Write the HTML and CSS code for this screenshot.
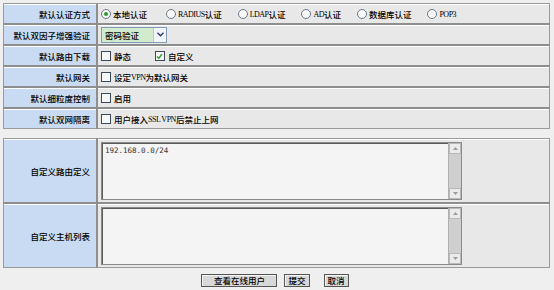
FILE: index.html
```html
<!DOCTYPE html>
<html lang="zh-CN">
<head>
    <meta charset="UTF-8">
    <title>SSL VPN 用户设置</title>
    <link rel="stylesheet" href="styles.css">
</head>
<body>

    <!-- 默认设置 -->
    <table class="grid">
        <tr>
            <td class="label">默认认证方式</td>
            <td class="value">
                <label class="opt first"><span class="radio on"></span>本地认证</label>
                <label class="opt"><span class="radio"></span><span class="en">RADIUS</span>认证</label>
                <label class="opt"><span class="radio"></span><span class="en">LDAP</span>认证</label>
                <label class="opt"><span class="radio"></span><span class="en">AD</span>认证</label>
                <label class="opt"><span class="radio"></span>数据库认证</label>
                <label class="opt"><span class="radio"></span><span class="en">POP3</span></label>
            </td>
        </tr>
        <tr>
            <td class="label">默认双因子增强验证</td>
            <td class="value">
                <div class="select">
                    <span class="select-text">密码验证</span>
                    <span class="select-btn">
                        <svg width="7" height="5" viewBox="0 0 7 5"><path d="M0.5 0.8 L3.5 3.8 L6.5 0.8" fill="none" stroke="#2a3a6a" stroke-width="1.4"/></svg>
                    </span>
                </div>
            </td>
        </tr>
        <tr>
            <td class="label">默认路由下载</td>
            <td class="value">
                <label class="opt wide"><span class="check"></span>静态</label>
                <label class="opt"><span class="check">
                    <svg width="7" height="7" viewBox="0 0 7 7"><path d="M1 3.5 L2.8 5.3 L6 1.2" fill="none" stroke="#2e9a2e" stroke-width="1.4"/></svg>
                </span>自定义</label>
            </td>
        </tr>
        <tr>
            <td class="label">默认网关</td>
            <td class="value">
                <label class="opt"><span class="check"></span>设定<span class="en">VPN</span>为默认网关</label>
            </td>
        </tr>
        <tr>
            <td class="label">默认细粒度控制</td>
            <td class="value">
                <label class="opt"><span class="check"></span>启用</label>
            </td>
        </tr>
        <tr>
            <td class="label">默认双网隔离</td>
            <td class="value">
                <label class="opt"><span class="check"></span>用户接入<span class="en">SSL VPN</span>后禁止上网</label>
            </td>
        </tr>
    </table>

    <!-- 自定义路由 / 主机 -->
    <table class="grid big">
        <tr>
            <td class="label">自定义路由定义</td>
            <td class="value">
                <div class="area">
                    <textarea>192.168.0.0/24</textarea>
                    <div class="sbar">
                        <span class="sbtn"><svg width="5" height="3" viewBox="0 0 5 3"><path d="M0 3 L2.5 0 L5 3Z" fill="#9a9a9a"/></svg></span>
                        <span class="sbtn"><svg width="5" height="3" viewBox="0 0 5 3"><path d="M0 0 L2.5 3 L5 0Z" fill="#9a9a9a"/></svg></span>
                    </div>
                </div>
            </td>
        </tr>
        <tr>
            <td class="label">自定义主机列表</td>
            <td class="value">
                <div class="area">
                    <textarea></textarea>
                    <div class="sbar">
                        <span class="sbtn"><svg width="5" height="3" viewBox="0 0 5 3"><path d="M0 3 L2.5 0 L5 3Z" fill="#9a9a9a"/></svg></span>
                        <span class="sbtn"><svg width="5" height="3" viewBox="0 0 5 3"><path d="M0 0 L2.5 3 L5 0Z" fill="#9a9a9a"/></svg></span>
                    </div>
                </div>
            </td>
        </tr>
    </table>

    <div class="actions">
        <button class="btn wide">查看在线用户</button>
        <button class="btn">提交</button>
        <button class="btn">取消</button>
    </div>

</body>
</html>
```

FILE: styles.css
```css
/* Global */
body {
    margin: 3px;
    background-color: #efefef;
    font-family: "Noto Sans CJK SC", "Liberation Sans", sans-serif;
    font-size: 8.5px;
    font-weight: 500;
    color: #000;
}

.en {
    font-family: "Liberation Serif", serif;
    font-size: 8px;
    font-weight: normal;
    letter-spacing: -0.5px;
}

/* Tables */
table.grid {
    width: 547px;
    border-collapse: collapse;
    border: 1px solid #9a9a9a;
}

table.grid td {
    height: 19px;
    padding: 0;
    border-bottom: 2px solid #8e8e8e;
    box-shadow: inset 0 1px 0 #ffffff;
}

table.grid tr:last-child td {
    border-bottom: none;
}

td.label {
    width: 86px;
    padding-right: 6px !important;
    text-align: right;
    background-color: #c8dbf2;
    border-right: 2px solid #8e8e8e;
}

td.value {
    background-color: #e8e8e8;
    padding-left: 3px !important;
}

/* Options */
.opt {
    display: inline-flex;
    align-items: center;
    margin-right: 14px;
    vertical-align: middle;
}

.opt.first {
    margin-right: 17px;
}

.opt.wide {
    margin-right: 22px;
}

.radio {
    width: 8px;
    height: 8px;
    margin: 0 2px 0 0;
    border: 1px solid #6b7a8a;
    border-radius: 50%;
    background: #f8f8f8;
    display: inline-flex;
    align-items: center;
    justify-content: center;
}

.radio.on::after {
    content: "";
    width: 4px;
    height: 4px;
    border-radius: 50%;
    background: #2e9a2e;
}

.check {
    width: 8px;
    height: 8px;
    margin: 0 3px 0 0;
    border: 1px solid #3a4a5a;
    background: #f8f8f8;
    display: inline-flex;
    align-items: center;
    justify-content: center;
}

/* Select */
.select {
    display: flex;
    width: 64px;
    height: 14px;
    border: 1px solid #7f9db9;
}

.select-text {
    flex: 1;
    padding-left: 3px;
    line-height: 14px;
    background-color: #d3ebcd;
}

.select-btn {
    width: 12px;
    display: flex;
    align-items: center;
    justify-content: center;
    background: #f2f4fa;
    border-left: 1px solid #b8c4dc;
}

/* Big rows */
table.big {
    margin-top: 9px;
}

table.big td {
    height: 63px;
}

.area {
    display: flex;
    width: 359px;
    height: 56px;
    border: 1px solid #8a8a8a;
    box-shadow: inset 1px 1px 0 #5a5a5a;
    background: #f4f4f4;
}

.area textarea {
    flex: 1;
    border: none;
    margin: 1px 0 0 1px;
    padding: 2px 2px;
    resize: none;
    background: transparent;
    font-family: "DejaVu Sans Mono", monospace;
    font-size: 7.5px;
    color: #333;
    outline: none;
}

.sbar {
    width: 12px;
    display: flex;
    flex-direction: column;
    justify-content: space-between;
    background: #cfcfcf;
    border-left: 1px solid #b0b0b0;
}

.sbtn {
    height: 9px;
    display: flex;
    align-items: center;
    justify-content: center;
    background: #ebebeb;
    border: 1px solid #b8b8b8;
}

/* Buttons */
.actions {
    display: flex;
    justify-content: center;
    gap: 7px;
    margin-top: 6px;
    padding-right: 4px;
}

.btn {
    height: 13px;
    padding: 0 3px;
    font-family: inherit;
    font-size: 8.5px;
    font-weight: 500;
    line-height: 11px;
    color: #000;
    background: #d8d8d8;
    border: 1px solid #555;
    box-shadow: inset 1px 1px 0 #f4f4f4;
    cursor: pointer;
}

.btn.wide {
    width: 76px;
}

.btn + .btn + .btn {
    margin-left: 7px;
}
```
